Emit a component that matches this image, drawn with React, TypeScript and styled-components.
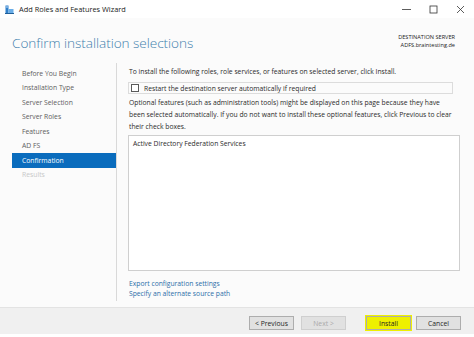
import React from "react";
import styled, { createGlobalStyle } from "styled-components";

const Global = createGlobalStyle`
  html, body { margin: 0; padding: 0; background: #ffffff; }
  body { font-family: "Open Sans", "Noto Sans", sans-serif; }
  * { box-sizing: border-box; }
`;

const Window = styled.div`
  width: 474px;
  height: 337px;
  display: flex;
  flex-direction: column;
  background: #fbfbfb;
  color: #1e1e1e;
  overflow: hidden;
`;

const TitleBar = styled.div`
  height: 18px;
  flex: none;
  display: flex;
  align-items: center;
  background: #ffffff;
  padding-left: 5px;
`;

const TitleText = styled.span`
  font-size: 7.4px;
  margin-left: 5px;
  color: #222;
  flex: 1;
`;

const WinButtons = styled.div`
  display: flex;
  align-items: center;
`;

const WinButton = styled.div`
  width: 27px;
  height: 18px;
  display: flex;
  align-items: center;
  justify-content: center;
`;

const Header = styled.div`
  height: 42px;
  flex: none;
  display: flex;
  align-items: center;
  justify-content: space-between;
  padding: 6px 19px 0 12px;
`;

const PageTitle = styled.h1`
  margin: 0;
  font-size: 13.6px;
  font-weight: 300;
  color: #3f7fad;
  letter-spacing: -0.05px;
`;

const ServerInfo = styled.div`
  text-align: right;
  font-size: 5.6px;
  line-height: 8px;
  color: #222;
  margin-top: -3px;
`;

const Body = styled.div`
  flex: 1;
  display: flex;
  padding-top: 3px;
  padding-bottom: 6px;
`;

const Sidebar = styled.nav`
  width: 117px;
  flex: none;
  border-right: 1px solid #d9d9d9;
  padding-top: 3px;
  display: flex;
  flex-direction: column;
  padding-left: 12px;
`;

const NavItem = styled.div<{ $active?: boolean; $disabled?: boolean }>`
  height: 14.5px;
  display: flex;
  align-items: center;
  padding-left: 10px;
  font-size: 6.8px;
  background: ${(p) => (p.$active ? "#0a6cbd" : "transparent")};
  color: ${(p) => (p.$active ? "#ffffff" : p.$disabled ? "#c8c8c8" : "#606060")};
`;

const Content = styled.div`
  flex: 1;
  display: flex;
  flex-direction: column;
  padding: 3px 15px 0 12px;
  font-size: 6.75px;
  color: #2a2a2a;
`;

const Intro = styled.div`
  height: 12px;
  line-height: 12px;
`;

const CheckRow = styled.label`
  margin-top: 4px;
  margin-left: -1px;
  height: 12px;
  display: flex;
  align-items: center;
  gap: 5px;
  padding-left: 2px;
  border: 1px solid #dcdcdc;
  width: 325px;
`;

const CheckBox = styled.span`
  width: 8px;
  height: 8px;
  border: 1px solid #5a5a5a;
  background: #fff;
  flex: none;
`;

const Note = styled.p`
  margin: 3px 0 0;
  line-height: 12px;
  white-space: nowrap;
`;

const ListBox = styled.div`
  margin-top: 2px;
  height: 136px;
  border: 1px solid #cfcfcf;
  background: #ffffff;
  padding: 3px 4px;
  width: 332px;
  margin-left: -1px;
`;

const Links = styled.div`
  margin-top: 8px;
  display: flex;
  flex-direction: column;
  line-height: 10px;
  color: #2b6ea8;
`;

const Footer = styled.div`
  height: 30px;
  flex: none;
  background: #f0f0f0;
  border-top: 1px solid #e3e3e3;
  border-bottom: 3px solid #ffffff;
  display: flex;
  align-items: center;
  justify-content: flex-end;
  padding-right: 13px;
  padding-top: 4px;
`;

const Button = styled.button<{ $highlight?: boolean; $disabled?: boolean; $gap?: number }>`
  font-family: inherit;
  width: 45px;
  height: 14px;
  font-size: 6.8px;
  padding: 0;
  margin-left: ${(p) => p.$gap ?? 0}px;
  border: 1px solid ${(p) => (p.$disabled ? "#cfcfcf" : "#adadad")};
  background: ${(p) => (p.$highlight ? "#eef000" : "#e1e1e1")};
  color: ${(p) => (p.$disabled ? "#a9a9a9" : "#1e1e1e")};
  box-shadow: ${(p) => (p.$highlight ? "0 0 0 1px #eef000" : "none")};
`;

const AppIcon = () => (
  <svg width="9" height="9" viewBox="0 0 9 9">
    <rect x="0.5" y="0.5" width="3" height="8" fill="#2f7fc9" />
    <rect x="3.5" y="4" width="5" height="4.5" fill="#6aaee8" />
    <rect x="1" y="1.5" width="2" height="1" fill="#bfe0ff" />
    <rect x="0" y="8" width="9" height="1" fill="#1f5f99" />
  </svg>
);

const steps = [
  "Before You Begin",
  "Installation Type",
  "Server Selection",
  "Server Roles",
  "Features",
  "AD FS",
  "Confirmation",
  "Results",
];

export default function App() {
  return (
    <Window>
      <Global />
      <TitleBar>
        <AppIcon />
        <TitleText>Add Roles and Features Wizard</TitleText>
        <WinButtons>
          <WinButton>
            <svg width="9" height="9" viewBox="0 0 9 9">
              <line x1="0" y1="4.5" x2="9" y2="4.5" stroke="#333" strokeWidth="0.8" />
            </svg>
          </WinButton>
          <WinButton>
            <svg width="9" height="9" viewBox="0 0 9 9">
              <rect x="1" y="1" width="7" height="7" fill="none" stroke="#333" strokeWidth="0.8" />
            </svg>
          </WinButton>
          <WinButton>
            <svg width="9" height="9" viewBox="0 0 9 9">
              <line x1="1" y1="1" x2="8" y2="8" stroke="#333" strokeWidth="0.8" />
              <line x1="8" y1="1" x2="1" y2="8" stroke="#333" strokeWidth="0.8" />
            </svg>
          </WinButton>
        </WinButtons>
      </TitleBar>
      <Header>
        <PageTitle>Confirm installation selections</PageTitle>
        <ServerInfo>
          DESTINATION SERVER
          <br />
          ADFS.braintesting.de
        </ServerInfo>
      </Header>
      <Body>
        <Sidebar>
          {steps.map((s) => (
            <NavItem key={s} $active={s === "Confirmation"} $disabled={s === "Results"}>
              {s}
            </NavItem>
          ))}
        </Sidebar>
        <Content>
          <Intro>
            To install the following roles, role services, or features on selected server, click Install.
          </Intro>
          <CheckRow>
            <CheckBox />
            Restart the destination server automatically if required
          </CheckRow>
          <Note>
            Optional features (such as administration tools) might be displayed on this page because they have
            <br />
            been selected automatically. If you do not want to install these optional features, click Previous to clear
            <br />
            their check boxes.
          </Note>
          <ListBox>Active Directory Federation Services</ListBox>
          <Links>
            <span>Export configuration settings</span>
            <span>Specify an alternate source path</span>
          </Links>
        </Content>
      </Body>
      <Footer>
        <Button>&lt; Previous</Button>
        <Button $disabled $gap={7}>Next &gt;</Button>
        <Button $highlight $gap={20}>Install</Button>
        <Button $gap={5}>Cancel</Button>
      </Footer>
    </Window>
  );
}
